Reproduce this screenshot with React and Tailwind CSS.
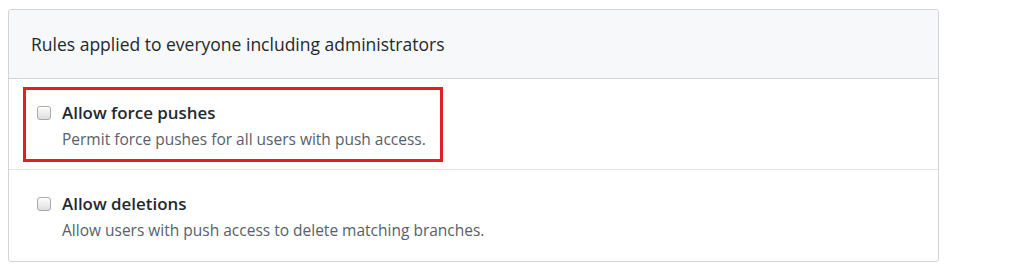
const font = { fontFamily: '"Open Sans", "Noto Sans", Arial, sans-serif' };

function Box() {
  return (
    <span className="mt-[5px] block h-[14px] w-[14px] shrink-0 rounded-[3px] border border-[#a9a9a9] bg-gradient-to-b from-[#fdfdfd] to-[#dedede] shadow-[inset_0_1px_0_#fff]" />
  );
}

function Option({ title, desc }) {
  return (
    <div className="flex items-start gap-[11px]">
      <Box />
      <div>
        <p className="text-[16.9px] font-semibold leading-[24px] text-[#24292e]">{title}</p>
        <p className="mt-[3px] text-[15.5px] leading-[22px] text-[#586069]">{desc}</p>
      </div>
    </div>
  );
}

export default function App() {
  return (
    <div className="h-[268px] w-[1024px] bg-white pl-[8px] pt-[9px]" style={font}>
      <div className="w-[931px] overflow-hidden rounded-[3px] border border-[#d1d5da]">
        <div className="flex h-[69px] items-center border-b border-[#d1d5da] bg-[#f6f8fa] px-[22px]">
          <h3 className="text-[17.5px] font-normal text-[#24292e]">Rules applied to everyone including administrators</h3>
        </div>
        <div className="h-[91px] border-b border-[#e1e4e8] pl-[14px] pt-[8px]">
          <div className="inline-block border-[3px] border-[#e81c24] pb-[9px] pl-[11px] pr-[14px] pt-[11px]">
            <Option title="Allow force pushes" desc="Permit force pushes for all users with push access." />
          </div>
        </div>
        <div className="h-[91px] pl-[28px] pt-[22px]">
          <Option title="Allow deletions" desc="Allow users with push access to delete matching branches." />
        </div>
      </div>
    </div>
  );
}
